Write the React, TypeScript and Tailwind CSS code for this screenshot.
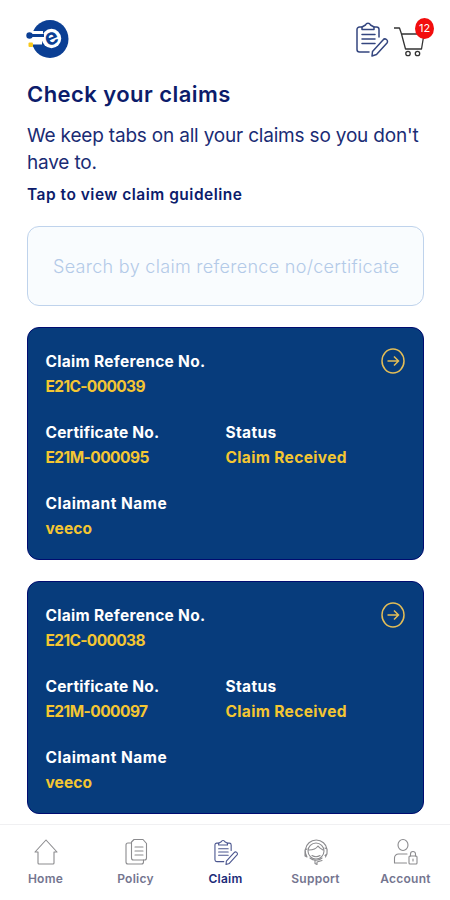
import type { ReactNode } from "react";

type Claim = {
  reference: string;
  certificate: string;
  status: string;
  claimant: string;
};

const claims: Claim[] = [
  {
    reference: "E21C-000039",
    certificate: "E21M-000095",
    status: "Claim Received",
    claimant: "veeco",
  },
  {
    reference: "E21C-000038",
    certificate: "E21M-000097",
    status: "Claim Received",
    claimant: "veeco",
  },
];

function Logo() {
  return (
    <svg width="46" height="42" viewBox="0 0 46 42" fill="none">
      <ellipse cx="25" cy="21" rx="18.5" ry="19" fill="#0b3f94" />
      <path d="M4 13h14v10H4z" fill="#fff" />
      <path d="M3 22h14v4.500H3z" fill="#fff" />
      <circle cx="26.5" cy="20.500" r="9.700" fill="#fff" />
      <circle cx="4.500" cy="17.500" r="3.200" fill="#0b3f94" />
      <path d="M4 17.500h15" stroke="#0b3f94" strokeWidth="3" />
      <rect x="3.500" y="24.500" width="4.500" height="4.500" rx="1" fill="#f8c81c" />
      <text
        x="20"
        y="26.500"
        transform="rotate(-22 26.500 20.500)"
        className="font-['Inter'] text-[22px] font-bold"
        fill="#0b3f94"
      >
        e
      </text>
    </svg>
  );
}

function ClipboardIcon({
  width,
  height,
  color,
}: {
  width: number;
  height: number;
  color: string;
}) {
  return (
    <svg
      width={width}
      height={height}
      viewBox="0 0 34 38"
      fill="none"
      stroke={color}
      strokeWidth="1.500"
      strokeLinejoin="round"
      strokeLinecap="round"
    >
      <path d="M7 7H4.500A2.500 2.500 0 0 0 2 9.500v20A2.500 2.500 0 0 0 4.500 32H14M19 7h2.500A2.500 2.500 0 0 1 24 9.500V17" />
      <path d="M7 9.500V7l3.500-2a2.700 2.700 0 0 1 5 0L19 7v2.500z" />
      <path d="M7 14.500h13M7 19h13M7 23.500h13" />
      <path d="M17.500 31.500L28 20a2.400 2.400 0 0 1 4 3L21.500 34.500 17 36z" />
    </svg>
  );
}

function CartIcon() {
  return (
    <svg
      width="34"
      height="34"
      viewBox="0 0 34 34"
      fill="none"
      stroke="#333"
      strokeWidth="1.300"
    >
      <path
        d="M0 3h5.500l2 6 4 15h16l2.500-15h-22"
        strokeLinejoin="round"
      />
      <circle cx="14" cy="28.500" r="2.200" />
      <circle cx="23.500" cy="28.500" r="2.200" />
    </svg>
  );
}

function ArrowIcon() {
  return (
    <svg
      width="24"
      height="26"
      viewBox="0 0 24 26"
      fill="none"
      stroke="#e3bd57"
      strokeWidth="1.500"
    >
      <ellipse cx="12" cy="13" rx="11" ry="12" />
      <path d="M6.500 13h11M13 8.500l4.500 4.500-4.500 4.500" />
    </svg>
  );
}

function Field({
  label,
  value,
  labelClass,
  valueClass,
}: {
  label: string;
  value: string;
  labelClass: string;
  valueClass: string;
}) {
  return (
    <div className="text-[15.500px] leading-[25px] font-bold whitespace-nowrap">
      <div className={`text-white ${labelClass}`}>{label}</div>
      <div className={`text-[#f4c632] ${valueClass}`}>{value}</div>
    </div>
  );
}

function ClaimCard({ claim }: { claim: Claim }) {
  return (
    <div className="h-[233px] rounded-xl border-[1.500px] border-[#000c70] bg-[#073c7c] pt-[21px] pr-[18.500px] pl-[17.500px]">
      <div className="flex items-start justify-between">
        <Field
          label="Claim Reference No."
          value={claim.reference}
          labelClass="tracking-[0.300px]"
          valueClass="tracking-[-0.650px]"
        />
        <div className="-mt-px">
          <ArrowIcon />
        </div>
      </div>
      <div className="mt-[21px] grid grid-cols-[180px_1fr]">
        <Field
          label="Certificate No."
          value={claim.certificate}
          labelClass="tracking-[0.200px]"
          valueClass="tracking-[-0.550px]"
        />
        <Field
          label="Status"
          value={claim.status}
          labelClass="tracking-[0.350px]"
          valueClass="tracking-[0.350px]"
        />
      </div>
      <div className="mt-[21px]">
        <Field
          label="Claimant Name"
          value={claim.claimant}
          labelClass="tracking-[0.500px]"
          valueClass="tracking-[0.100px]"
        />
      </div>
    </div>
  );
}

function NavIcon({ children }: { children: ReactNode }) {
  return (
    <svg
      width="28"
      height="28"
      viewBox="0 0 28 28"
      fill="none"
      stroke="#8b8b8e"
      strokeWidth="1.100"
      strokeLinejoin="round"
      strokeLinecap="round"
    >
      {children}
    </svg>
  );
}

const navItems = [
  {
    label: "Home",
    icon: (
      <NavIcon>
        <path d="M6 14H3L14 2l11 12h-3v11a1 1 0 0 1-1 1H7a1 1 0 0 1-1-1z" />
      </NavIcon>
    ),
  },
  {
    label: "Policy",
    icon: (
      <NavIcon>
        <path d="M12 1.500h9l3.500 4V20a2 2 0 0 1-2 2H11.500a2 2 0 0 1-2-2V4z" />
        <path d="M9.500 5H6a2 2 0 0 0-2 2v17a2 2 0 0 0 2 2h13.500a2 2 0 0 0 2-2v-2" />
        <path d="M13 9h8M13 13h8M13 17h8" />
      </NavIcon>
    ),
  },
  {
    label: "Claim",
    icon: <ClipboardIcon width={26} height={28} color="#4b568f" />,
    active: true,
  },
  {
    label: "Support",
    icon: (
      <NavIcon>
        <path d="M5 19a11 11 0 1 1 18.500 0M5 19l-2-1v-6l2-1M23 10l2 1v5l-2 1.500M20 22.500l-5 1.500v2.500l-2-1V22" />
        <circle cx="14" cy="13" r="8" />
        <path d="M7 12c4 0 7-1 9-4 1 2 3 3 5 4M10 17.500c2.500 1.500 5.500 1.500 8 0M8 20c3 3 9 3 12 0" />
      </NavIcon>
    ),
  },
  {
    label: "Account",
    icon: (
      <NavIcon>
        <ellipse cx="11" cy="7" rx="5" ry="5.500" />
        <path d="M14.500 25H2.500v-5a4 4 0 0 1 4-4H15" />
        <rect x="17" y="18" width="8" height="8" rx="1" />
        <path d="M18.500 18v-2a2.500 2.500 0 0 1 5 0v2M21 21v2" />
      </NavIcon>
    ),
  },
];

export default function App() {
  return (
    <div className="flex h-[900px] w-[450px] flex-col overflow-hidden bg-white font-['Inter',sans-serif] text-[#0c1c6b]">
      <header className="flex h-[72px] items-start justify-between pt-[18px] pr-[22px] pl-[25px]">
        <Logo />
        <div className="flex items-start gap-[5px] pt-[2px]">
          <ClipboardIcon width={34} height={38} color="#34467f" />
          <div className="relative pt-[5px]">
            <CartIcon />
            <span className="absolute -top-[2px] -right-[6px] flex h-[21px] w-[19px] items-center justify-center rounded-[50%] bg-[#f20d0d] text-[11px] text-white">
              12
            </span>
          </div>
        </div>
      </header>

      <main className="flex-1 pt-2 pr-[26px] pl-[27px]">
        <h1 className="text-[22px] leading-7 font-semibold tracking-[0.450px] whitespace-nowrap">
          Check your claims
        </h1>
        <p className="mt-[15px] text-[19px] leading-[26.500px] tracking-[-0.190px] whitespace-nowrap text-[#1a2c74]">
          We keep tabs on all your claims so you don't
          <br />
          have to.
        </p>
        <p className="mt-[9px] text-[15.500px] leading-5 font-semibold tracking-[0.500px]">
          Tap to view claim guideline
        </p>
        <div className="mt-[21px] flex h-20 items-center rounded-xl border-[1.500px] border-[#bfd3ec] bg-[#f9fcfe] pl-[25px] text-[18px] font-light tracking-[0.300px] whitespace-nowrap text-[#b3cae8]">
          Search by claim reference no/certificate
        </div>
        <div className="mt-[21px] flex flex-col gap-[21px]">
          {claims.map((claim) => (
            <ClaimCard key={claim.reference} claim={claim} />
          ))}
        </div>
      </main>

      <nav className="grid h-[76px] shrink-0 grid-cols-5 border-t border-[#f0f0f2] pt-[13px]">
        {navItems.map((item) => (
          <div key={item.label} className="flex flex-col items-center pl-px">
            {item.icon}
            <span
              className={`mt-[5px] text-[12px] leading-4 font-semibold tracking-[0.250px] ${item.active ? "text-[#1b2b78]" : "text-[#74758f]"}`}
            >
              {item.label}
            </span>
          </div>
        ))}
      </nav>
    </div>
  );
}
